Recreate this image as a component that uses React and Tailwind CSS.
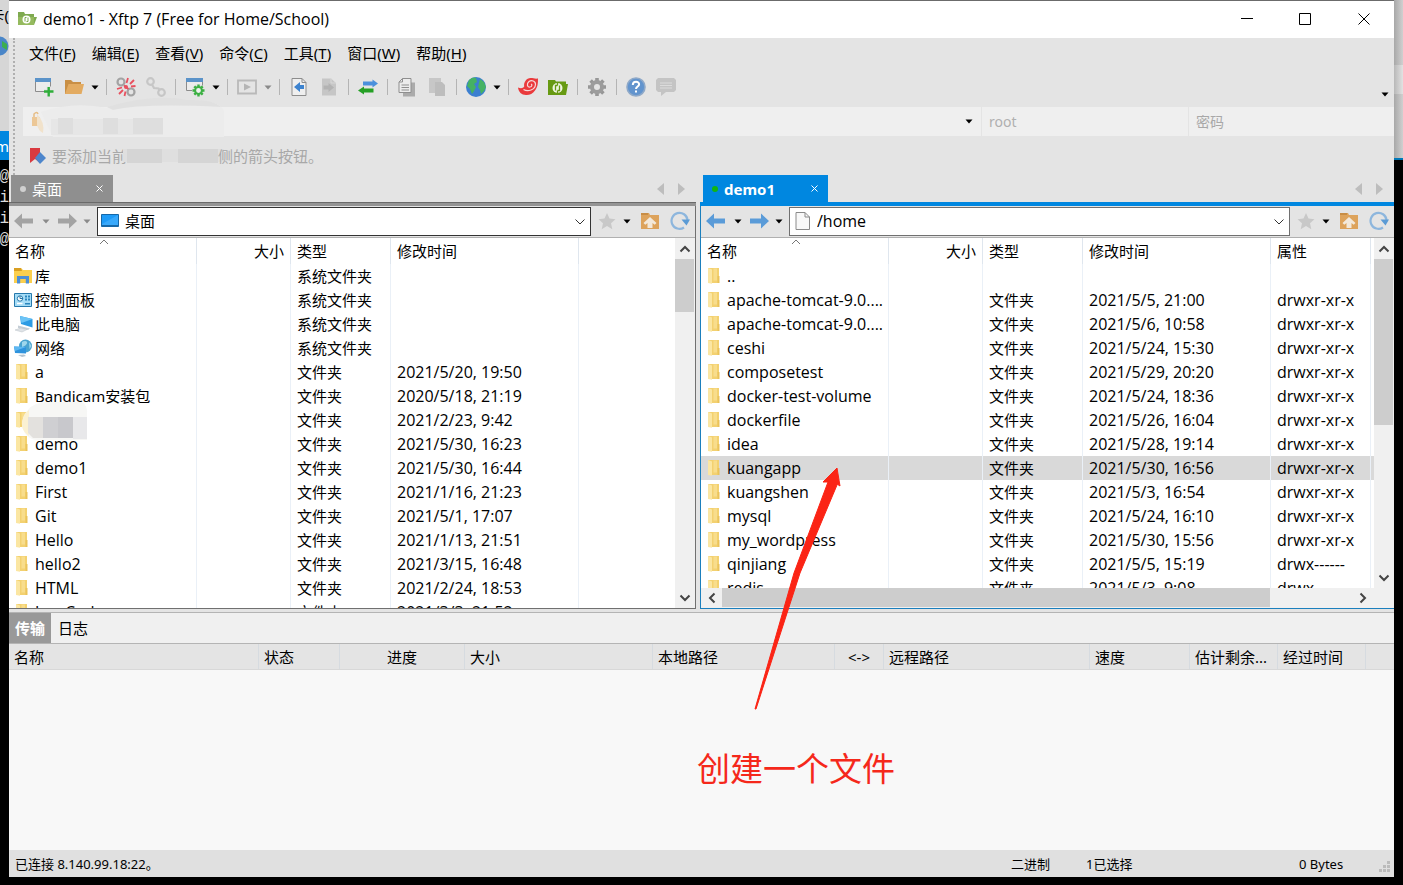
import React from "react";

const Svg = ({ w = 20, h = 20, children, className = "" }) => (
  <svg width={w} height={h} viewBox={`0 0 ${w} ${h}`} className={"shrink-0 " + className} fill="none" aria-hidden="true">
    {children}
  </svg>
);

const Caret = ({ color = "#000" }) => (
  <Svg w={8} h={5}><path d="M0.5 0.5h7L4 4.5z" fill={color} /></Svg>
);

const Chevron = ({ dir = "down", className = "" }) => {
  const d = {
    up: "M1.5 8.5L6 4l4.500 4.500",
    down: "M1.500 3.500L6 8l4.500-4.500",
    left: "M8.500 1.500L4 6l4.500 4.500",
    right: "M3.500 1.500L8 6l-4.500 4.500",
  }[dir];
  return <Svg w={12} h={12} className={className}><path d={d} stroke="#444" strokeWidth="2" /></Svg>;
};

const gearPath = "M10 1v18M1 10h18M3.600 3.600l12.800 12.800M16.400 3.600L3.600 16.400";

const icons = {
  newSession: (
    <Svg>
      <path d="M1.500 1.500h15v13h-15z" fill="#ececec" stroke="#8c8c8c" />
      <path d="M1 1h16v4H1z" fill="#5b93c9" />
      <path d="M10 14.500h10M15 9.500v10" stroke="#e4e4e4" strokeWidth="5" />
      <path d="M10 14.500h9.500M14.700 10v9.500" stroke="#2fae3a" strokeWidth="2.400" />
    </Svg>
  ),
  open: (
    <Svg>
      <path d="M1 3h6l2 2h8v12H1z" fill="#c98f45" />
      <path d="M4.500 7H20l-2.500 10H1z" fill="#e3ab61" />
    </Svg>
  ),
  disconnect: (
    <Svg>
      <circle cx="5" cy="5" r="3.500" stroke="#a3a3a3" strokeWidth="2.200" />
      <circle cx="15" cy="15" r="3.500" stroke="#a3a3a3" strokeWidth="2.200" />
      <path d="M12 1l-1.500 5M18 3l-4 4M19.500 9l-4.500.500M1 12l5-1.500M3 17l4-4M8.500 19l1-4.500M8 8.500l4.500 3.500" stroke="#e8505e" strokeWidth="1.800" />
      <circle cx="10" cy="10" r="2" fill="#e8505e" />
    </Svg>
  ),
  reconnect: (
    <Svg>
      <circle cx="4.500" cy="4.500" r="3.300" stroke="#c6c6c6" strokeWidth="2.200" />
      <circle cx="15.500" cy="15.500" r="3.300" stroke="#c6c6c6" strokeWidth="2.200" />
      <path d="M6 7.500l2 3.500 4.500.5 1.500 2" stroke="#c6c6c6" strokeWidth="2.200" />
    </Svg>
  ),
  properties: (
    <Svg>
      <path d="M1.500 1.500h16v12h-16z" fill="#ececec" stroke="#8c8c8c" />
      <path d="M1 1h17v4H1z" fill="#5b93c9" />
      <circle cx="13.500" cy="13.500" r="6.500" fill="#e4e4e4" />
      <path d="M13.500 7.500v12M7.500 13.500h12M9.300 9.300l8.400 8.400M17.700 9.300l-8.400 8.400" stroke="#3cb043" strokeWidth="2.400" />
      <circle cx="13.500" cy="13.500" r="3.400" fill="#f0f0f0" stroke="#3cb043" strokeWidth="2" />
    </Svg>
  ),
  play: (
    <Svg>
      <path d="M1 3.500h18v13H1z" stroke="#b9b9b9" strokeWidth="1.800" />
      <path d="M7 6.500l7 3.500-7 3.500z" fill="#b5b5b5" />
    </Svg>
  ),
  fileLeft: (
    <Svg>
      <path d="M3 1.500h10l4 4v13H3z" fill="#efefef" stroke="#8d8d8d" />
      <path d="M13 1.500v4h4" stroke="#8d8d8d" />
      <path d="M5 10l6-5v3h4v4h-4v3z" fill="#3d83cf" />
    </Svg>
  ),
  fileGray: (
    <Svg>
      <path d="M3 1.500h9l5 4.500v12.500H3z" fill="#c6c6c6" />
      <path d="M12 1.500V6h5" stroke="#d8d8d8" />
      <path d="M4.500 8.500h5V6l5.500 4.500-5.500 4.500v-2.500h-5z" fill="#b3b3b3" />
    </Svg>
  ),
  transfer: (
    <Svg>
      <path d="M5 4.500h9.500V2.500L20 6.500l-5.500 4V8.500H5z" fill="#4a90dc" />
      <path d="M15.500 11.500H6V9.500L0 13.500l6 4v-2h9.500z" fill="#25a025" />
    </Svg>
  ),
  copy: (
    <Svg>
      <path d="M6 5.500h12v14H6z" fill="#ababab" />
      <path d="M5.500 1.500H14v14H2V5z" fill="#ececec" stroke="#8f8f8f" />
      <path d="M5.500 1.500V5H2M4.500 8h7.500M4.500 10.500h7.500M4.500 13h7.500" stroke="#8f8f8f" />
    </Svg>
  ),
  paste: (
    <Svg>
      <path d="M2 1h12v15H2z" fill="#c7c7c7" />
      <path d="M8 5h7l3 3v11H8z" fill="#bdbdbd" />
    </Svg>
  ),
  globe: (
    <Svg>
      <circle cx="10" cy="10" r="10" fill="#3c7fd0" />
      <path d="M3 3C6 0 9 0 10 1l1 4-3 2 2 3-2 4-2 3-2-5-3-3zM14 2l4 3 2 5-2 4-3 3-1-4-2-3 1-4z" fill="#45b263" />
    </Svg>
  ),
  swirl: (
    <Svg>
      <path d="M0 10.500c2.500 1 5 1 6.200-1C5.500 5 8.500 1.200 12.500 1c3 0 4.500 1 7.500.500 0 6-.5 8.500-3 12-2.300 3.300-5.500 4.700-9 4.500C3.500 18 .5 15 0 10.500z" fill="#ea3a3c" />
      <path d="M5.500 12.500c4.500 2.500 11.500.5 12-5 .2-3.500-4-5-6.500-3s-2 6 1 5.500c2-.3 2.500-2.500 1-3" stroke="#f6dada" strokeWidth="1.200" />
    </Svg>
  ),
  xftp: (
    <Svg>
      <path d="M0 3h7l1 1.500h10V7h2l-2 11H0z" fill="#679a12" />
      <circle cx="9.500" cy="11" r="5" fill="#f0f6e2" />
      <path d="M9.500 8.500H7.500v5M9.500 13.500h2v-5M9.500 6v2.500M9.500 13.500V16" stroke="#679a12" strokeWidth="1.300" />
    </Svg>
  ),
  gear: (
    <Svg>
      <path d={gearPath} stroke="#979797" strokeWidth="3.600" />
      <circle cx="10" cy="10" r="5" fill="#e4e4e4" stroke="#9c9c9c" strokeWidth="4" />
    </Svg>
  ),
  help: (
    <Svg>
      <circle cx="10" cy="10" r="9" fill="#6294ce" stroke="#8fa9c8" strokeWidth="1.600" />
      <path d="M6.800 8c0-4.500 6.600-4 6.300-.500C13 9.500 10 9.700 10 12" stroke="#fff" strokeWidth="2" />
      <path d="M9 13.500h2v2H9z" fill="#fff" />
    </Svg>
  ),
  chat: (
    <Svg>
      <path d="M2 1h16l2 2v10l-2 2h-8l-5 4v-4H2l-2-2V3z" fill="#c4c4c4" />
      <path d="M4 6h12M4 8.500h12M4 11h12" stroke="#dcdcdc" />
    </Svg>
  ),
};

const FolderIcon = () => (
  <Svg w={18} h={18}>
    <path d="M2 1h11v15H2z" fill="#f3d170" />
    <path d="M2 1l4 1.500v14.200L2 16z" fill="#fbe6a2" />
    <path d="M7.500 1.500h3.500v12H7.500z" fill="#f8dd8c" />
    <path d="M11.500 9H13.500v7h-2z" fill="#eac35a" />
  </Svg>
);

const LibraryIcon = () => (
  <Svg w={18} h={18}>
    <path d="M0 1h7l2 2h9v13H0z" fill="#fbcf4e" />
    <path d="M0 1h7l1 3H0z" fill="#d99f22" />
    <path d="M3 16.500V9h12v7.500h-3.200V12H6.200v4.500z" fill="#4d8fd6" />
  </Svg>
);
const PanelIcon = () => (
  <Svg w={18} h={18}>
    <path d="M.500 2.500h17v13H.500z" fill="#a5dcf6" stroke="#2679ac" />
    <circle cx="6" cy="7.500" r="2.700" fill="#fff" stroke="#2476a9" />
    <path d="M6 5v2.500h3" stroke="#2476a9" />
    <path d="M11 4.500h2v2h-2zM14 4.500h2v2h-2zM11 7.500h2v2h-2zM14 7.500h2v2h-2zM11 12h5v1.500h-5z" fill="#2b86bd" />
    <path d="M3 12.500h5.500" stroke="#fff" strokeWidth="1.500" />
  </Svg>
);
const PcIcon = () => (
  <Svg w={20} h={18} className="-mr-0.5">
    <path d="M6 1l12.500 3v8.500L7 9z" fill="#2c9be4" />
    <path d="M6 1l12.500 3-11 4z" fill="#6cc4f6" />
    <path d="M4 10.500l12 3-2 1.500-10-2z" fill="#c5ced6" />
    <path d="M1 15l6-2 6 1.500L8 17z" fill="#dfe3e7" stroke="#b9c0c6" strokeWidth=".5" />
  </Svg>
);
const NetIcon = () => (
  <Svg w={18} h={18}>
    <circle cx="11.500" cy="7" r="6.500" fill="#4aa3cf" />
    <path d="M8 3c3-2 6-1 5 1.500S9 7 8 9zM15 3l2.500 4-2 3z" fill="#9ed6ec" />
    <path d="M0 7.500L12 8v6.500L1 14z" fill="#2f93dd" />
    <path d="M0 7.500L12 8 1 12z" fill="#5db8f2" />
    <path d="M4 16l6-.5 2 1.500-4 1z" fill="#b5c4cf" />
  </Svg>
);

const Arrow = ({ flip, color }) => (
  <Svg>
    <path d={flip ? "M20 10l-8-7.500V7.500H1v5h11v5z" : "M0 10l8-7.500V7.500h11v5H8v5z"} fill={color} />
  </Svg>
);
const Star = () => (
  <Svg><path d="M10 2l2.500 5.600 6 .6-4.500 4 1.300 6L10 15l-5.300 3.200 1.300-6-4.500-4 6-.6z" fill="#c8c8c8" /></Svg>
);
const UpFolder = () => (
  <Svg>
    <path d="M1 2h8l1 2h9v14H1z" fill="#dda35c" />
    <path d="M1 2h7v2H1z" fill="#c88d45" />
    <path d="M10 6l6.500 6-1.800 1.800L12.500 12v5h-5v-5l-2.200 1.800L3.500 12z" fill="#f3e9db" />
  </Svg>
);
const Refresh = () => (
  <Svg>
    <path d="M14 16.500A8 8 0 1 1 17.500 9" stroke="#8db6dd" strokeWidth="2.200" />
    <path d="M11.500 8.500H20l-3.500 6z" fill="#5b9bd5" />
  </Svg>
);

const IconButton = ({ label, children, className = "" }) => (
  <button type="button" aria-label={label} className={"flex h-6 shrink-0 items-center justify-center " + className}>
    {children}
  </button>
);

const Sep = ({ wide }) => (
  <div className={"flex shrink-0 justify-center " + (wide ? "w-2.5" : "w-[9px]")}>
    <div className="h-4 w-px bg-[#b4b4b4]" />
  </div>
);

const tools = [
  ["newSession", "新建"], ["open", "打开"], "caret", "wide",
  ["disconnect", "断开"], ["reconnect", "重新连接"], "sep",
  ["properties", "属性"], "caret", "wide",
  ["play", "运行"], "caretGray", "wide",
  ["fileLeft", "传输到左侧"], ["fileGray", "传输到右侧"], "sep",
  ["transfer", "同步"], "sep",
  ["copy", "复制"], ["paste", "粘贴"], "sep",
  ["globe", "编码"], "caret", "wide",
  ["swirl", "Xshell"], ["xftp", "Xftp"], "sep",
  ["gear", "选项"], "sep",
  ["help", "帮助"], ["chat", "反馈"],
];

const menus = [["文件", "F"], ["编辑", "E"], ["查看", "V"], ["命令", "C"], ["工具", "T"], ["窗口", "W"], ["帮助", "H"]];

const NameMosaic = () => (
  <svg width="66" height="40" viewBox="0 0 66 40" className="absolute -top-1.5 left-2 z-10" aria-hidden="true">
    <path d="M6 8Q12 0 26 0H58Q66 1 65 14V38H16Q4 38 0 24Q0 14 6 8z" fill="#f7f7f5" />
    <path d="M0 24Q0 12 7 8V34Q1 30 0 24z" fill="#fbf1d2" />
    <path d="M6 15h15v21H11L6 31z" fill="#e3e1de" />
    <path d="M21 15h15v21H21z" fill="#cfcfd2" />
    <path d="M36 15h15v21H36z" fill="#c8c8cc" />
    <path d="M51 15h14v22H51z" fill="#e8e8ea" />
  </svg>
);

const F = "文件夹";
const S = "系统文件夹";
const localRows = [
  ["库", "", S, "", LibraryIcon], ["控制面板", "", S, "", PanelIcon], ["此电脑", "", S, "", PcIcon], ["网络", "", S, "", NetIcon],
  ["a", "", F, "2021/5/20, 19:50"], ["Bandicam安装包", "", F, "2020/5/18, 21:19"], [<NameMosaic key="m" />, "", F, "2021/2/23, 9:42"],
  ["demo", "", F, "2021/5/30, 16:23"], ["demo1", "", F, "2021/5/30, 16:44"], ["First", "", F, "2021/1/16, 21:23"],
  ["Git", "", F, "2021/5/1, 17:07"], ["Hello", "", F, "2021/1/13, 21:51"], ["hello2", "", F, "2021/3/15, 16:48"],
  ["HTML", "", F, "2021/2/24, 18:53"], ["JavaCode", "", F, "2021/3/3, 21:52"],
];
const X = "drwxr-xr-x";
const remoteRows = [
  ["..", "", "", "", ""], ["apache-tomcat-9.0....", "", F, "2021/5/5, 21:00", X], ["apache-tomcat-9.0....", "", F, "2021/5/6, 10:58", X],
  ["ceshi", "", F, "2021/5/24, 15:30", X], ["composetest", "", F, "2021/5/29, 20:20", X], ["docker-test-volume", "", F, "2021/5/24, 18:36", X],
  ["dockerfile", "", F, "2021/5/26, 16:04", X], ["idea", "", F, "2021/5/28, 19:14", X], ["kuangapp", "", F, "2021/5/30, 16:56", X],
  ["kuangshen", "", F, "2021/5/3, 16:54", X], ["mysql", "", F, "2021/5/24, 16:10", X], ["my_wordpress", "", F, "2021/5/30, 15:56", X],
  ["qinjiang", "", F, "2021/5/5, 15:19", "drwx------"], ["redis", "", F, "2021/5/3, 9:08", "drwx------"],
];

const latin = "font-['Open_Sans',sans-serif] text-[16px]";
const isLatin = (v) => typeof v === "string" && !/[\u4e00-\u9fff]/.test(v);

function FileTable({ rows, remote }) {
  const heads = remote ? ["名称", "大小", "类型", "修改时间", "属性"] : ["名称", "大小", "类型", "修改时间"];
  return (
    <div className="min-w-0 flex-1 overflow-hidden bg-white">
      <table className="w-full table-fixed border-separate border-spacing-0 whitespace-nowrap">
        <colgroup>
          <col className="w-[188px]" /><col className="w-[94px]" /><col className="w-[100px]" /><col className="w-[188px]" />
          {remote && <col className="w-[100px]" />}
          <col />
        </colgroup>
        <thead>
          <tr className="h-[26px]">
            {heads.map((h, i) => (
              <th key={h} className={"relative border-r border-[#dfe6ee] px-1.5 py-0 font-normal " + (i === 1 ? "text-right" : "text-left")}>
                {h}
                {i === 0 && (
                  <Svg w={10} h={6} className="absolute left-[90px] top-px"><path d="M1 5l4-4 4 4" stroke="#777" /></Svg>
                )}
              </th>
            ))}
            <td />
          </tr>
        </thead>
        <tbody>
          {rows.map((r, ri) => {
            const Icon = r[remote ? 5 : 4] || FolderIcon;
            return (
              <tr key={ri} className={"h-6 " + (r[0] === "kuangapp" ? "bg-[#d9d9d9]" : "")}>
                {heads.map((h, i) => (
                  <td key={h} className={"border-r border-[#eaf0f7] py-0 " + (i ? "px-1.5 " : "px-[5px] ") + (isLatin(r[i]) ? latin : "")}>
                    {i === 0 ? (
                      <div className="relative flex h-6 items-center gap-[3px]"><Icon />{r[0]}</div>
                    ) : r[i]}
                  </td>
                ))}
                <td />
              </tr>
            );
          })}
        </tbody>
      </table>
    </div>
  );
}

function VScroll({ thumb }) {
  return (
    <div className="flex w-5 shrink-0 flex-col bg-[#f0f0f0]">
      <IconButton label="向上滚动" className="h-[21px]!"><Chevron dir="up" /></IconButton>
      <div className={"w-[19px] bg-[#cdcdcd] " + thumb} />
      <div className="flex-1" />
      <IconButton label="向下滚动" className="h-[21px]!"><Chevron /></IconButton>
    </div>
  );
}

function Pane({ remote }) {
  const nav = remote ? "#5a9bd8" : "#a3a3a3";
  const caret = remote ? "#000" : "#8a8a8a";
  return (
    <section className="flex min-h-0 min-w-0 flex-col">
      <div className="flex h-[27px] shrink-0 items-stretch justify-between">
        <div className={"flex items-center text-white " + (remote ? "ml-[3px] w-[125px] bg-[#0087e0] pl-[9px] pr-2.5" : "ml-0.5 w-[102px] bg-[#8f8f8f] pl-[9px] pr-2.5")}>
          <span className={"size-1.5 shrink-0 rounded-full " + (remote ? "bg-[#12b512]" : "bg-[#d0d0d0]")} />
          <span className={"ml-1.5 flex-1 " + (remote ? "font-bold" : "")}>{remote ? "demo1" : "桌面"}</span>
          <button type="button" aria-label="关闭"><Svg w={7} h={7}><path d="M.5.5l6 6M6.500.5l-6 6" stroke="#fff" /></Svg></button>
        </div>
        <div className="flex items-center gap-3.5 pr-[11px]">
          <button type="button" aria-label="上一个"><Svg w={7} h={12}><path d="M7 0v12L0 6z" fill="#bdbdbd" /></Svg></button>
          <button type="button" aria-label="下一个"><Svg w={7} h={12}><path d="M0 0v12l7-6z" fill="#bdbdbd" /></Svg></button>
        </div>
      </div>
      <div className={"h-1 shrink-0 " + (remote ? "bg-[#0087e0]" : "border-t border-[#6a6a6a] bg-[#949494]")} />
      <div className={"flex min-h-0 flex-1 flex-col border-b " + (remote ? "border-l border-[#1b7fbd]" : "border-r border-[#707070]")}>
        <div className="flex h-8 shrink-0 items-center border-b border-[#b0b0b0] bg-[#e4e4e4] pb-px">
          <div className="flex w-[88px] shrink-0 pl-[5px]">
            <IconButton label="后退" className="w-5"><Arrow color={nav} /></IconButton>
            <IconButton label="后退历史" className="w-[23px]"><Caret color={caret} /></IconButton>
            <IconButton label="前进" className="w-5"><Arrow flip color={nav} /></IconButton>
            <IconButton label="前进历史" className="w-5"><Caret color={caret} /></IconButton>
          </div>
          <div className={"relative flex h-[29px] min-w-0 flex-1 items-center border bg-white pl-[3px] " + (remote ? "border-[#707070]" : "border-[#333]")}>
            {remote ? (
              <Svg><path d="M3 1.500h9l4.500 4.500v12.500H3z" fill="#f8f8f8" stroke="#8a8a8a" /><path d="M12 1.500V6h4.500" stroke="#8a8a8a" /></Svg>
            ) : (
              <Svg><path d="M.5 3.500h17v12H.5z" fill="#1e9bf7" stroke="#1668a8" /><path d="M1 13L17 4v11H1z" fill="#39a9fb" /><path d="M1 14.500h16" stroke="#1668a8" /></Svg>
            )}
            <select aria-label="路径" className={"h-full w-full min-w-0 appearance-none bg-transparent pl-1 outline-none " + (remote ? latin : "")}>
              <option>{remote ? "/home" : "桌面"}</option>
            </select>
            <Svg w={10} h={6} className="pointer-events-none absolute right-[5px] top-[11px]"><path d="M.5.5L5 5l4.500-4.500" stroke="#333" /></Svg>
          </div>
          <div className="flex pl-1.5 pr-[5px]">
            <IconButton label="收藏" className="w-5"><Star /></IconButton>
            <IconButton label="收藏列表" className="w-5"><Caret /></IconButton>
            <IconButton label="上级目录" className="ml-[3px] w-5"><UpFolder /></IconButton>
            <IconButton label="刷新" className="ml-2.5 w-5"><Refresh /></IconButton>
          </div>
        </div>
        <div className="flex min-h-0 flex-1">
          <FileTable rows={remote ? remoteRows : localRows} remote={remote} />
          <VScroll thumb={remote ? "h-[166px]" : "h-[53px]"} />
        </div>
        {remote && (
          <div className="flex h-5 shrink-0 bg-[#f0f0f0] pr-[21px]">
            <IconButton label="向左滚动" className="h-5! w-[21px]"><Chevron dir="left" /></IconButton>
            <div className="flex min-w-0 flex-1"><div className="h-[19px] w-[87%] bg-[#cdcdcd]" /></div>
            <IconButton label="向右滚动" className="h-5! w-[21px]"><Chevron dir="right" /></IconButton>
          </div>
        )}
      </div>
    </section>
  );
}

const transferHeads = [
  ["名称", "w-[250px]"], ["状态", "w-[81px]"], ["进度", "w-[125px] text-center"], ["大小", "w-[188px]"], ["本地路径", "w-[182px]"],
  ["<->", "w-[49px] text-center"], ["远程路径", "w-[206px]"], ["速度", "w-[100px]"], ["估计剩余...", "w-[88px]"], ["经过时间", "w-[88px]"],
];

export default function App() {
  return (
    <div className="flex h-screen overflow-hidden bg-black font-['Noto_Sans','Noto_Sans_CJK_SC',sans-serif] text-[15px] leading-6 text-black">
      <div className="flex w-[9px] shrink-0 flex-col overflow-hidden">
        <div className="flex h-[131px] shrink-0 flex-col items-end bg-[#d6d6d6]">
          <div className="flex h-[30px] items-center whitespace-nowrap">卡(</div>
          <Svg w={20} h={20} className="mt-1.5"><circle cx="10" cy="10" r="9.500" fill="#4a86c8" /><path d="M13 5l5 3v6l-5-3z" fill="#3cae50" /></Svg>
        </div>
        <div className="flex h-[29px] shrink-0 items-center justify-end bg-[#0087e0] text-white">m</div>
        <div className="flex flex-col items-end pt-[7px] font-['Liberation_Mono',monospace] text-[16px] leading-[21px] text-[#ddd]">
          <span>@</span><span>i</span><span>i</span><span>@</span>
        </div>
      </div>

      <main className="relative mb-2 flex min-w-0 flex-1 flex-col border-t border-[#6b6b6b] bg-[#e4e4e4]">
        <header className="flex h-[37px] shrink-0 items-center bg-white pb-px pl-2">
          <Svg><path d="M1 3h6l1 2h9v3h3l-3 8H1z" fill="#7faa50" /><path d="M1 8h16v8H1z" fill="#95ba5e" /><circle cx="9.500" cy="10.500" r="4" fill="#fff" /><path d="M9.500 8.500H8v4M9.500 12.500H11v-4" stroke="#7faa50" /></Svg>
          <h1 className="ml-1.5 flex-1 font-['Open_Sans',sans-serif] text-[16px]">demo1 - Xftp 7 (Free for Home/School)</h1>
          <button type="button" aria-label="最小化" className="flex h-full w-[58px] items-center justify-center"><Svg w={12} h={12}><path d="M0 5.500h12" stroke="#000" /></Svg></button>
          <button type="button" aria-label="最大化" className="flex h-full w-[58px] items-center justify-center"><Svg w={12} h={12}><path d="M.5.5h11v11H.5z" stroke="#000" /></Svg></button>
          <button type="button" aria-label="关闭窗口" className="flex h-full w-[60px] items-center justify-center"><Svg w={12} h={12}><path d="M.5.5l11 11M11.500.5l-11 11" stroke="#000" /></Svg></button>
        </header>

        <div className="flex h-[137px] shrink-0">
          <div className="ml-1 w-0.5 border-r-2 border-dotted border-[#b0b0b0]" />
          <div className="flex min-w-0 flex-1 flex-col pl-2">
            <nav className="flex h-[30px] items-center gap-4 pl-1.5">
              {menus.map(([t, k]) => (
                <button key={k} type="button">{t}(<span className="underline underline-offset-2">{k}</span>)</button>
              ))}
            </nav>
            <div className="mb-px flex h-[38px] items-center pl-1.5">
              {tools.map((t, i) => {
                if (t === "sep" || t === "wide") return <Sep key={i} wide={t === "wide"} />;
                if (t === "caret" || t === "caretGray")
                  return <IconButton key={i} label="展开" className="w-3"><Caret color={t === "caret" ? "#000" : "#8a8a8a"} /></IconButton>;
                return <IconButton key={i} label={t[1]} className="w-[30px]">{icons[t[0]]}</IconButton>;
              })}
              <IconButton label="更多工具" className="ml-auto mr-[5px] self-end"><Caret /></IconButton>
            </div>
            <div className="relative flex h-[29px] gap-px text-[14px]">
              <div className="flex min-w-0 flex-1 items-center bg-[#efefef]">
                <input aria-label="主机" className="h-full min-w-0 flex-1 bg-transparent outline-none" />
                <IconButton label="主机列表" className="mr-2 w-2"><Caret /></IconButton>
              </div>
              <input aria-label="用户名" placeholder="root" className="w-[206px] bg-[#efefef] px-[7px] outline-none placeholder:text-[#b0b0b0]" />
              <input aria-label="密码" placeholder="密码" type="password" className="w-[205px] bg-[#efefef] px-[7px] outline-none placeholder:text-[#a8a8a8]" />
              <svg width="210" height="42" viewBox="0 0 210 42" className="pointer-events-none absolute -top-2.5 left-0" aria-hidden="true">
                <path d="M18 15Q50 4 84 11Q130-4 165 4Q196 2 201 14V40H30z" fill="#ececec" />
                <path d="M84 10Q130-4 165 3Q190 2 198 10Q120 6 90 13z" fill="#e0e0e0" />
                <path d="M28 22h112v16H28z" fill="#e6e6e6" />
                <path d="M35 21h15v16H35zM80 21h15v16H80zM110 21h30v16h-30z" fill="#dedede" />
                <path d="M9 20h8v9H9z" fill="#ecc796" />
                <path d="M11 20v-3q3-3 4 0" stroke="#e6bd86" strokeWidth="1.500" fill="none" />
                <path d="M14 17q8 8 6 19-5-3-6-8z" fill="#f1e2cb" />
              </svg>
            </div>
            <div className="flex flex-1 items-center pl-[7px] text-[#a8a8a8]">
              <Svg w={16} h={18}><path d="M0 1h10v15l-5-4-5 4z" fill="#d93a40" /><path d="M10 5l6 6-6 6-5-6z" fill="#4d86cc" /></Svg>
              <span className="ml-1.5">要添加当前</span>
              <svg width="101" height="18" viewBox="0 0 101 18" className="-ml-1 shrink-0" aria-hidden="true">
                <path d="M0 2h101v13H0z" fill="#dfdfdf" />
                <path d="M4 2h35v14H4zM55 2h40v14H55z" fill="#d5d5d5" />
              </svg>
              <span className="-ml-1.5">侧的箭头按钮。</span>
            </div>
          </div>
        </div>

        <div className="grid min-h-0 flex-1 grid-cols-[687fr_694fr] grid-rows-[minmax(0,1fr)] gap-x-1">
          <Pane />
          <Pane remote />
        </div>

        <section className="mt-[3px] shrink-0 border-t border-[#b4b4b4] bg-[#f8f8f8]">
          <div className="flex h-[30px] bg-[#f0f0f0]">
            <button type="button" className="w-[42px] bg-[#999] font-bold text-white">传输</button>
            <button type="button" className="px-[7px]">日志</button>
          </div>
          <table className="w-full table-fixed border-separate border-spacing-0 border-y border-t-[#b4b4b4] border-b-[#d8d8d8] bg-[#e4e4e4]">
            <thead>
              <tr className="h-[25px]">
                {transferHeads.map(([t, c]) => (
                  <th key={t} className={"whitespace-nowrap border-r border-[#d6dbe0] px-[5px] py-0 font-normal " + (c.includes("center") ? "" : "text-left ") + c}>{t}</th>
                ))}
                <td />
              </tr>
            </thead>
          </table>
          <div className="h-[180px]" />
        </section>

        <footer className="flex h-[27px] shrink-0 items-center bg-[#e0e0e0] pl-1.5 text-[13px]">
          <span className="flex-1">已连接 8.140.99.18:22。</span>
          <span className="w-[75px]">二进制</span>
          <span className="w-[213px]">1已选择</span>
          <span className="w-[80px]">0 Bytes</span>
          <Svg w={15} h={20}><path d="M8 7h3v3H8zM4 11h3v3H4zM8 11h3v3H8zM0 15h3v3H0zM4 15h3v3H4zM8 15h3v3H8z" fill="#bbb" /></Svg>
        </footer>

        <svg width="90" height="245" viewBox="0 0 90 245" className="pointer-events-none absolute left-[745px] top-[464px]" aria-hidden="true">
          <path d="M1 244L40 108L74 17L69 17L83 3L86 21L83 19L83 20L46 108L2 244z" fill="#fb2415" stroke="#fb2415" strokeLinejoin="round" />
        </svg>
        <p className="pointer-events-none absolute left-[688px] top-[744px] whitespace-nowrap text-[33px] leading-[48px] text-[#f5281b]">创建一个文件</p>
      </main>

      <div className="flex w-[9px] shrink-0 flex-col bg-black">
        <div className="h-[65px] bg-linear-to-r from-[#a8a8a8] to-[#d0d0d0]" />
        <div className="h-[29px] bg-linear-to-r from-[#b8b8b8] to-[#e2e2e2]" />
        <div className="h-[66px] border-b-2 border-[#0078b8] bg-linear-to-r from-[#a8a8a8] to-[#d0d0d0]" />
      </div>
    </div>
  );
}
